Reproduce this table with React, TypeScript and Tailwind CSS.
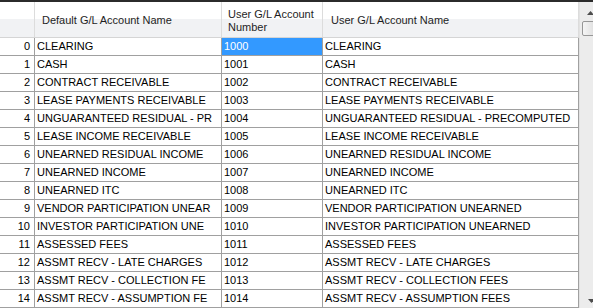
import React from 'react';

type Account = { name: string; num: string; user: string };

const accounts: Account[] = [
  { name: 'CLEARING', num: '1000', user: 'CLEARING' },
  { name: 'CASH', num: '1001', user: 'CASH' },
  { name: 'CONTRACT RECEIVABLE', num: '1002', user: 'CONTRACT RECEIVABLE' },
  { name: 'LEASE PAYMENTS RECEIVABLE', num: '1003', user: 'LEASE PAYMENTS RECEIVABLE' },
  { name: 'UNGUARANTEED RESIDUAL - PR', num: '1004', user: 'UNGUARANTEED RESIDUAL - PRECOMPUTED' },
  { name: 'LEASE INCOME RECEIVABLE', num: '1005', user: 'LEASE INCOME RECEIVABLE' },
  { name: 'UNEARNED RESIDUAL INCOME', num: '1006', user: 'UNEARNED RESIDUAL INCOME' },
  { name: 'UNEARNED INCOME', num: '1007', user: 'UNEARNED INCOME' },
  { name: 'UNEARNED ITC', num: '1008', user: 'UNEARNED ITC' },
  { name: 'VENDOR PARTICIPATION UNEAR', num: '1009', user: 'VENDOR PARTICIPATION UNEARNED' },
  { name: 'INVESTOR PARTICIPATION UNE', num: '1010', user: 'INVESTOR PARTICIPATION UNEARNED' },
  { name: 'ASSESSED FEES', num: '1011', user: 'ASSESSED FEES' },
  { name: 'ASSMT RECV - LATE CHARGES', num: '1012', user: 'ASSMT RECV - LATE CHARGES' },
  { name: 'ASSMT RECV - COLLECTION FE', num: '1013', user: 'ASSMT RECV - COLLECTION FEES' },
  { name: 'ASSMT RECV - ASSUMPTION FE', num: '1014', user: 'ASSMT RECV - ASSUMPTION FEES' },
];

const cols = 'grid grid-cols-[35px_187px_101px_256px]';
const headCell =
  'border-r border-[#dcdcdc] bg-[linear-gradient(#ffffff_0%,#ffffff_50%,#f1f2f4_50%,#f1f2f4_100%)] flex items-center pt-[2px]';
const cell = 'h-[18px] border-r border-b border-[#a0a0a0] leading-[17px] whitespace-nowrap overflow-hidden';

const Scrollbar: React.FC = () => (
  <div className="flex-1 bg-[#ececec] border-l border-[#e2e2e2] flex flex-col items-center relative">
    <svg width="7" height="4" viewBox="0 0 7 4" className="mt-[9px] ml-[2px]">
      <path d="M3.5 0 L7 4 L0 4 Z" fill="#4d4d4d" />
    </svg>
    <div className="mt-[6px] ml-[2px] w-[16px] h-[15px] rounded-[2px] border border-[#979797] bg-[linear-gradient(90deg,#f5f5f5,#e8e8e8_50%,#d9d9d9)]" />
    <svg width="7" height="4" viewBox="0 0 7 4" className="absolute bottom-[5px] left-[8px]">
      <path d="M0 0 L7 0 L3.5 4 Z" fill="#4d4d4d" />
    </svg>
  </div>
);

export default function App() {
  return (
    <div className="w-[593px] h-[308px] overflow-hidden bg-white flex font-['Liberation_Sans',Arial,sans-serif] text-[11px] text-black border-t-2 border-[#2b2b2b]">
      <div className="w-[579px] flex flex-col">
        <div className={`${cols} h-[37px] border-b border-[#d5d5d5] text-[#1e1e1e]`}>
          <div className={headCell} />
          <div className={`${headCell} pl-[7px]`}>Default G/L Account Name</div>
          <div className={`${headCell} pl-[6px] leading-[13px]`}>
            User G/L Account
            <br />
            Number
          </div>
          <div className={`${headCell} pl-[8px]`}>User G/L Account Name</div>
        </div>
        {accounts.map((a, i) => (
          <div key={i} className={cols}>
            <div className={`${cell} text-right pr-[4px]`}>{i}</div>
            <div className={`${cell} pl-[2px]`}>{a.name}</div>
            <div className={`${cell} pl-[2px] ${i === 0 ? 'bg-[#3399ff] text-white' : ''}`}>{a.num}</div>
            <div className={`${cell} pl-[2px]`}>{a.user}</div>
          </div>
        ))}
      </div>
      <Scrollbar />
    </div>
  );
}
